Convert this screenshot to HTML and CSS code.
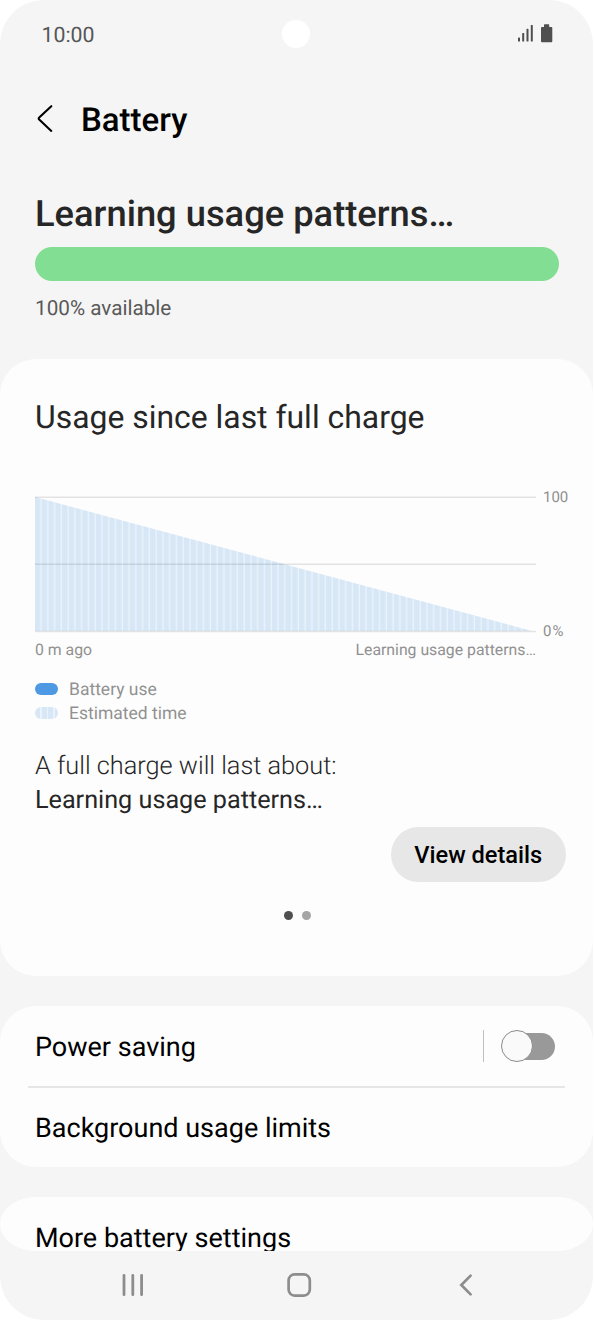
FILE: index.html
```html
<!DOCTYPE html>
<html lang="en">
<head>
<meta charset="utf-8">
<title>Battery</title>
<link rel="stylesheet" href="styles.css">
</head>
<body>
<div class="phone">
  <header class="status">
    <span class="clock">10:00</span>
    <span class="camera"></span>
    <svg class="status-icons" width="38" height="20" viewBox="0 0 38 20">
      <g fill="#4f4f4f">
        <rect x="1" y="13.5" width="2" height="4" rx=".6"/>
        <rect x="5.2" y="9" width="2" height="8.5" rx=".6"/>
        <rect x="9.5" y="4.8" width="2" height="12.7" rx=".6"/>
        <rect x="13.8" y="1" width="2" height="16.5" rx=".6"/>
        <path d="M27.6 0.3h4q.6 0 .6.6V3h2.1q1 0 1 1v13.3q0 1-1 1H25q-1 0-1-1V4q0-1 1-1h2V.9q0-.6.6-.6Z"/>
      </g>
    </svg>
  </header>

  <div class="titlebar">
    <svg class="back" width="18" height="30" viewBox="0 0 18 30"><path d="M16.3 2.2 4.2 13.6q-1 .9 0 1.9L16.3 26.9" fill="none" stroke="#000" stroke-width="2.1" stroke-linecap="round"/></svg>
    <h1 class="title">Battery</h1>
  </div>

  <section class="summary">
    <h2 class="headline">Learning usage patterns…</h2>
    <div class="level"></div>
    <p class="available">100% available</p>
  </section>

  <section class="card usage">
    <h2 class="usage-title">Usage since last full charge</h2>
    <div class="chart">
      <svg width="502" height="138" viewBox="0 0 502 138">
        <defs>
          <pattern id="bars" width="6.77" height="138" patternUnits="userSpaceOnUse">
            <rect width="6.77" height="138" fill="#d7e7f6"/>
            <rect x="5.4" width="1.6" height="138" fill="#eaf3fc"/>
          </pattern>
        </defs>
        <path d="M0 2 497 136H0Z" fill="url(#bars)"/>
        <path d="M0 2.2H501M0 69.3H501M0 136.4H501" stroke="#000" stroke-opacity=".1" stroke-width="1.5"/>
      </svg>
      <div class="scale"><span>100</span><span class="zero">0%</span></div>
    </div>
    <div class="times"><span>0 m ago</span><span>Learning usage patterns…</span></div>
    <ul class="legend">
      <li><span class="chip chip-use"></span><span class="legend-use">Battery use</span></li>
      <li><span class="chip chip-estimate"></span><span class="legend-estimate">Estimated time</span></li>
    </ul>
    <p class="forecast">A full charge will last about:</p>
    <p class="forecast-value">Learning usage patterns…</p>
    <button class="details">View details</button>
    <div class="dots"><span class="dot dot-on"></span><span class="dot"></span></div>
  </section>

  <section class="card options">
    <div class="row">
      <span class="power">Power saving</span>
      <span class="row-rule"></span>
      <span class="switch"><span class="knob"></span></span>
    </div>
    <div class="row row-last"><span class="limits">Background usage limits</span></div>
  </section>

  <section class="card more"><span class="more-label">More battery settings</span></section>

  <nav class="nav">
    <svg width="24" height="26" viewBox="0 0 24 26"><path d="M3 3.3V22.7M11.8 3.3V22.7M20.6 3.3V22.7" fill="none" stroke="#8d8d8d" stroke-width="2.8" stroke-linecap="round"/></svg>
    <svg width="26" height="26" viewBox="0 0 26 26"><rect x="2.6" y="2.4" width="21.2" height="21.2" rx="6" fill="none" stroke="#8d8d8d" stroke-width="2.7"/></svg>
    <svg width="16" height="26" viewBox="0 0 16 26"><path d="M12.6 3.6 3.3 13 12.6 22.4" fill="none" stroke="#8d8d8d" stroke-width="2.7" stroke-linecap="round"/></svg>
  </nav>
</div>
</body>
</html>
```
FILE: styles.css
```css
* { box-sizing: border-box; }
body { margin: 0; background: #fff; font-family: Roboto, sans-serif; text-rendering: geometricPrecision; }
h1, h2, p, ul { margin: 0; padding: 0; }
span, h1, h2, p { white-space: nowrap; }
svg { display: block; flex: none; }

.phone {
  width: 593px;
  height: 1320px;
  background: #f5f5f5;
  border-radius: 44px;
  overflow: hidden;
}

.status {
  display: grid;
  grid-template-columns: 1fr 28px 1fr;
  align-items: center;
  height: 67px;
  padding: 0 38px 0 41.5px;
}
.clock { font-size: 21.3px; padding-top: 3px; color: #565656; }
.camera { width: 28px; height: 28px; border-radius: 50%; background: #fff; margin-left: -2px; }
.status-icons { justify-self: end; }

.titlebar { display: flex; align-items: center; height: 103px; padding-left: 35px; gap: 28px; }
.title { padding-top: 4px; font-size: 33px; font-weight: 500; line-height: 40px; color: #000; }

.summary { height: 189px; padding: 21px 34px 0 35px; }
.headline { font-size: 36.3px; font-weight: 500; line-height: 45px; color: #262626; }
.level { height: 34px; margin-top: 11px; border-radius: 17px; background: #82de93; }
.available { margin-top: 15px; font-size: 20.7px; line-height: 27px; color: #595959; }

.card { background: #fdfdfd; border-radius: 36px; }
.usage { display: flex; flex-direction: column; height: 617px; padding: 38px 27.5px 0 35px; }
.usage-title { font-size: 31.9px; font-weight: 400; line-height: 40px; color: #262626; }
.chart { display: flex; gap: 6px; margin-top: 58px; }
.scale {
  display: flex;
  flex-direction: column;
  justify-content: space-between;
  margin: -7px 0;
  font-size: 15px;
  line-height: 18px;
  color: #8f8f8f;
}
.zero { letter-spacing: 1px; }
.times {
  display: flex;
  justify-content: space-between;
  width: 501px;
  margin-top: 7px;
  font-size: 15.8px;
  line-height: 20px;
  color: #919191;
}
.legend { list-style: none; margin-top: 18px; font-size: 17.5px; line-height: 24px; color: #919191; }
.legend li { display: flex; align-items: center; gap: 11px; }
.chip { width: 23px; height: 12px; border-radius: 6px; margin-top: -2px; }
.chip-use { background: #4d99e4; }
.chip-estimate { background: repeating-linear-gradient(90deg, #d7e7f6 0 5.1px, #eaf3fc 5.1px 6.7px); }
.forecast { margin-top: 25px; font-size: 25.3px; font-weight: 300; line-height: 32px; color: #262626; }
.forecast-value { margin-top: 2px; font-size: 25.2px; line-height: 32px; color: #262626; }
.details {
  align-self: flex-end;
  width: 174.5px;
  height: 55px;
  margin-top: 9.5px;
  padding: 2px 0 0;
  border: 0;
  border-radius: 28px;
  background: #e7e7e7;
  color: #000;
  font: 500 23.6px Roboto, sans-serif;
}
.dots { display: flex; gap: 9px; margin: 29.5px 0 0 248.5px; }
.dot { width: 9px; height: 9px; border-radius: 50%; background: #a5a5a5; }
.dot-on { background: #4f4f4f; }

.options { height: 161px; margin-top: 30px; padding: 0 28px; color: #000; }
.row { display: flex; align-items: center; height: 82px; padding: 0 10px 0 7px; border-bottom: 2px solid #e6e6e6; }
.row-last { height: 79px; padding-bottom: 2px; border: 0; }
.power, .limits { font-size: 27px; line-height: 32px; padding-top: 2px; }
.row-rule { width: 1px; height: 32px; margin: 0 17px 0 auto; background: #c0c0c0; }
.switch {
  display: flex;
  align-items: center;
  width: 54px;
  height: 27px;
  border-radius: 14px;
  background: linear-gradient(90deg, transparent 16px, #999 16px);
}
.knob { width: 32px; height: 32px; flex: none; border: 1.5px solid #8b8b8b; border-radius: 50%; background: #fafafa; }

.more { height: 54px; margin-top: 30px; padding: 25px 0 0 35px; border-radius: 36px / 27px; overflow: hidden; color: #000; }
.more-label { display: block; font-size: 27px; line-height: 32px; }

.nav { display: flex; align-items: center; height: 68px; padding-left: 121px; }
.nav svg:nth-child(2) { margin-left: 141px; }
.nav svg:nth-child(3) { margin-left: 146px; }
```
